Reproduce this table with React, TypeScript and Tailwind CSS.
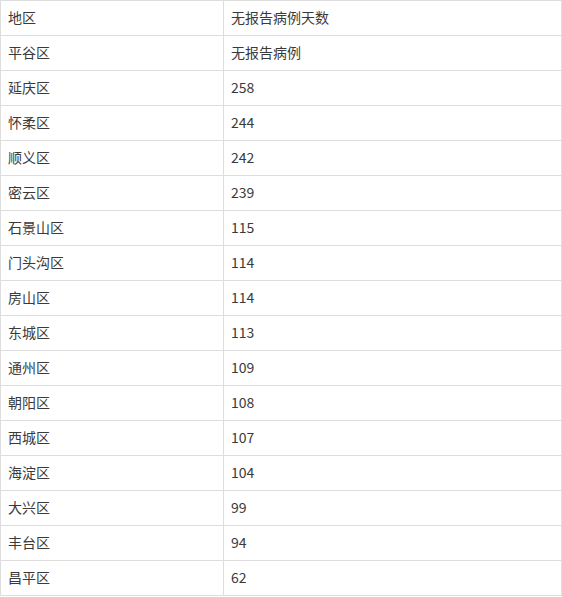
import React from "react";

const rows: [string, string][] = [
  ["平谷区", "无报告病例"],
  ["延庆区", "258"],
  ["怀柔区", "244"],
  ["顺义区", "242"],
  ["密云区", "239"],
  ["石景山区", "115"],
  ["门头沟区", "114"],
  ["房山区", "114"],
  ["东城区", "113"],
  ["通州区", "109"],
  ["朝阳区", "108"],
  ["西城区", "107"],
  ["海淀区", "104"],
  ["大兴区", "99"],
  ["丰台区", "94"],
  ["昌平区", "62"],
];

const cell = "border border-[#dddddd] px-[7px] pt-0 pb-[2px] leading-none";

export default function App() {
  return (
    <div
      className="w-[562px] bg-white text-[14px] text-[#3a3a3a]"
      style={{ fontFamily: '"Noto Sans CJK SC", "Noto Sans", sans-serif' }}
    >
      <table className="w-[562px] table-fixed border-collapse">
        <colgroup>
          <col className="w-[223px]" />
          <col />
        </colgroup>
        <tbody>
          <tr className="h-[35px]">
            <td className={cell}>地区</td>
            <td className={cell}>无报告病例天数</td>
          </tr>
          {rows.map(([area, days]) => (
            <tr key={area} className="h-[35px]">
              <td className={cell}>{area}</td>
              <td className={cell}>{days}</td>
            </tr>
          ))}
        </tbody>
      </table>
    </div>
  );
}
